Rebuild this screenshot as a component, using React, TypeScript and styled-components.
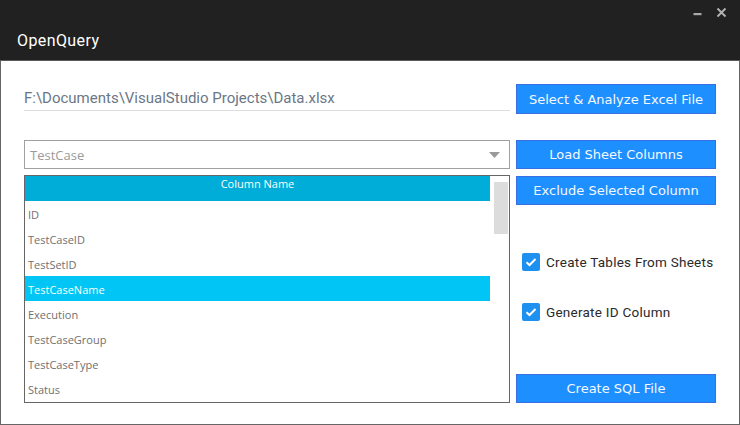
import React from "react";
import styled, { createGlobalStyle } from "styled-components";

const Global = createGlobalStyle`
  html, body { margin: 0; padding: 0; background: #ffffff; }
  body { width: 740px; height: 425px; overflow: hidden; }
`;

const Window = styled.div`
  width: 740px;
  height: 425px;
  display: flex;
  flex-direction: column;
  background: #212121;
`;

const TitleBar = styled.div`
  height: 60px;
  position: relative;
  display: flex;
  align-items: flex-end;
  padding: 0 0 9px 17px;
  box-sizing: border-box;
`;

const Title = styled.div`
  font-family: Roboto, "Noto Sans", sans-serif;
  font-size: 16px;
  font-weight: 400;
  letter-spacing: 0.4px;
  color: #ffffff;
  line-height: 20px;
`;

const WinControls = styled.div`
  position: absolute;
  top: 6px;
  right: 13px;
  display: flex;
  align-items: center;
  gap: 14px;
`;

const Content = styled.div`
  flex: 1;
  background: #ffffff;
  border: 1px solid #666666;
  border-top-color: #5a5a5a;
  box-sizing: border-box;
  padding: 23px 22px 0 23px;
  display: flex;
  flex-direction: column;
`;

const Row = styled.div<{ $mt?: number }>`
  display: flex;
  gap: 6px;
  margin-top: ${(p) => p.$mt ?? 0}px;
`;

const PathField = styled.div`
  width: 486px;
  height: 26px;
  border-bottom: 1px solid #dedede;
  box-sizing: content-box;
  font-family: Roboto, "Noto Sans", sans-serif;
  font-size: 15px;
  color: #6b7786;
  line-height: 28px;
  white-space: nowrap;
`;

const Button = styled.button`
  width: 200px;
  height: 30px;
  flex: none;
  background: #1e8fff;
  border: 1px solid #3a6fe2;
  color: #f4f8ff;
  font-family: "DejaVu Sans", Verdana, sans-serif;
  font-size: 13px;
  font-weight: 400;
  padding: 0;
  margin: 0;
  box-sizing: border-box;
  cursor: pointer;
`;

const Combo = styled.div`
  width: 486px;
  height: 29px;
  box-sizing: border-box;
  border: 1px solid #a0a0a0;
  display: flex;
  align-items: center;
  justify-content: space-between;
  padding: 0 9px 0 5px;
  font-family: "Open Sans", "Noto Sans", sans-serif;
  font-size: 13px;
  color: #9a9a9a;
`;

const List = styled.div`
  width: 486px;
  height: 228px;
  box-sizing: border-box;
  border: 1px solid #666666;
  display: flex;
`;

const Items = styled.div`
  width: 465px;
  display: flex;
  flex-direction: column;
`;

const Header = styled.div`
  height: 25px;
  background: #00acd8;
  color: #ffffff;
  font-family: "Open Sans", "Noto Sans", sans-serif;
  font-size: 11px;
  text-align: center;
  line-height: 15px;
  box-sizing: border-box;
`;

const Item = styled.div<{ $selected?: boolean }>`
  height: 25px;
  flex: none;
  display: flex;
  align-items: center;
  padding: 1px 0 0 3px;
  box-sizing: border-box;
  font-family: "Open Sans", "Noto Sans", sans-serif;
  font-size: 11px;
  color: ${(p) => (p.$selected ? "#ffffff" : "#707070")};
  background: ${(p) => (p.$selected ? "#00c5f5" : "transparent")};
`;

const Track = styled.div`
  flex: 1;
  padding: 6px 0 0 4px;
`;

const Thumb = styled.div`
  width: 14px;
  height: 52px;
  background: #dcdcdc;
`;

const RightCol = styled.div`
  width: 200px;
  display: flex;
  flex-direction: column;
  padding-top: 1px;
`;

const CheckRow = styled.label<{ $mt: number }>`
  display: flex;
  align-items: center;
  gap: 6px;
  margin: ${(p) => p.$mt}px 0 0 6px;
  font-family: Roboto, "Noto Sans", sans-serif;
  font-size: 13.5px;
  font-weight: 400;
  color: #2a2a2a;
  letter-spacing: 0.25px;
`;

const Box = styled.span`
  width: 18px;
  height: 18px;
  border-radius: 2px;
  background: #1e90f0;
  display: flex;
  align-items: center;
  justify-content: center;
`;

const Bottom = styled.div`
  margin-top: auto;
`;

const items = [
  "ID",
  "TestCaseID",
  "TestSetID",
  "TestCaseName",
  "Execution",
  "TestCaseGroup",
  "TestCaseType",
  "Status",
];

const Check = () => (
  <Box>
    <svg width="12" height="10" viewBox="0 0 12 10">
      <path d="M1.5 5.2 L4.5 8 L10.5 2" stroke="#fff" strokeWidth="2" fill="none" />
    </svg>
  </Box>
);

export default function App() {
  return (
    <>
      <Global />
      <Window>
        <TitleBar>
          <Title>OpenQuery</Title>
          <WinControls>
            <svg width="9" height="12" viewBox="0 0 9 12">
              <rect x="0.5" y="7" width="8" height="2.2" fill="#a8a8a8" />
            </svg>
            <svg width="11" height="11" viewBox="0 0 11 11">
              <path d="M1.5 1.5 L9.5 9.5 M9.5 1.5 L1.5 9.5" stroke="#b4b4b4" strokeWidth="1.8" />
            </svg>
          </WinControls>
        </TitleBar>
        <Content>
          <Row style={{ alignItems: "flex-start" }}>
            <PathField>F:\Documents\VisualStudio Projects\Data.xlsx</PathField>
            <Button>Select &amp; Analyze Excel File</Button>
          </Row>
          <Row $mt={26}>
            <Combo>
              <span>TestCase</span>
              <svg width="11" height="6" viewBox="0 0 11 6">
                <path d="M0 0 H11 L5.5 6 Z" fill="#9a9a9a" />
              </svg>
            </Combo>
            <Button style={{ height: 29 }}>Load Sheet Columns</Button>
          </Row>
          <Row $mt={6}>
            <List>
              <Items>
                <Header>Column Name</Header>
                {items.map((it) => (
                  <Item key={it} $selected={it === "TestCaseName"}>
                    {it}
                  </Item>
                ))}
              </Items>
              <Track>
                <Thumb />
              </Track>
            </List>
            <RightCol>
              <Button style={{ height: 29 }}>Exclude Selected Column</Button>
              <CheckRow $mt={48}>
                <Check />
                Create Tables From Sheets
              </CheckRow>
              <CheckRow $mt={32}>
                <Check />
                Generate ID Column
              </CheckRow>
              <Bottom>
                <Button style={{ height: 29 }}>Create SQL File</Button>
              </Bottom>
            </RightCol>
          </Row>
        </Content>
      </Window>
    </>
  );
}
